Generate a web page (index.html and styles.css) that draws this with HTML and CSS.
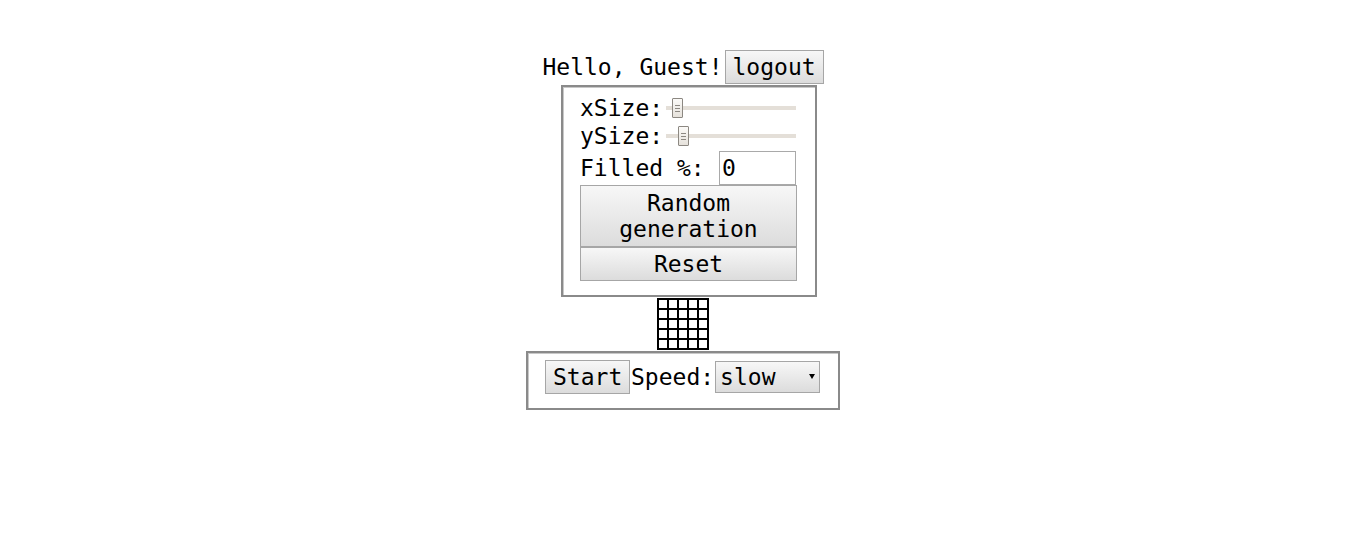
FILE: index.html
```html
<!DOCTYPE html>
<html>
<head>
<meta charset="utf-8">
<title>Game of Life</title>
<link rel="stylesheet" href="styles.css">
</head>
<body>
<div class="page">
  <div class="greeting"><span class="hello">Hello, Guest!</span><button class="btn btn-logout">logout</button></div>
  <div class="panel panel-settings">
    <div class="row row-slider"><span class="label">xSize:</span><input class="slider" type="range" min="0" max="100" value="5"></div>
    <div class="row row-slider"><span class="label">ySize:</span><input class="slider" type="range" min="0" max="100" value="10"></div>
    <div class="row row-filled"><span class="label label-filled">Filled %:</span><input class="text-input" type="text" value="0"></div>
    <button class="btn btn-wide btn-random">Random<br>generation</button>
    <button class="btn btn-wide btn-reset">Reset</button>
  </div>
  <div class="grid">
    <i></i><i></i><i></i><i></i><i></i>
    <i></i><i></i><i></i><i></i><i></i>
    <i></i><i></i><i></i><i></i><i></i>
    <i></i><i></i><i></i><i></i><i></i>
    <i></i><i></i><i></i><i></i><i></i>
  </div>
  <div class="panel panel-controls">
    <button class="btn btn-start">Start</button><span class="label">Speed:</span><span class="select-wrap"><select class="select"><option>slow</option><option>medium</option><option>fast</option></select></span>
  </div>
</div>
</body>
</html>
```

FILE: styles.css
```css
html, body {
  margin: 0;
  padding: 0;
  background: #ffffff;
}
body {
  font-family: "DejaVu Sans Mono", "Liberation Mono", monospace;
  font-size: 23px;
  color: #000000;
}
.page {
  display: flex;
  flex-direction: column;
  align-items: center;
  padding-top: 50px;
  padding-left: 8px;
}
.greeting {
  display: flex;
  align-items: center;
  height: 34px;
  margin-bottom: 1px;
  line-height: 26px;
}
.hello {
  margin-right: 2px;
}
.btn {
  font-family: inherit;
  font-size: 23px;
  line-height: 26px;
  color: #000;
  background: linear-gradient(#f7f7f7, #dcdcdc);
  border: 1px solid #a6a6a6;
  border-radius: 0;
  padding: 0 7px;
  margin: 0;
  height: 34px;
  cursor: pointer;
}
.btn-logout {
  width: 99px;
}
.panel {
  border: 2px solid #8a8a8a;
  box-shadow: inset 1px 1px 0 #c8c8c8;
  box-sizing: border-box;
}
.panel-settings {
  width: 256px;
  margin-left: 12px;
  padding: 7px 18px 14px 17px;
  display: flex;
  flex-direction: column;
}
.row {
  display: flex;
  align-items: center;
}
.row-slider {
  height: 28px;
}
.label {
  white-space: pre;
  line-height: 26px;
}
.slider {
  -webkit-appearance: none;
  appearance: none;
  width: 130px;
  height: 20px;
  margin: 0 0 0 3px;
  padding: 0;
  background: transparent;
}
.slider::-webkit-slider-runnable-track {
  height: 4px;
  background: #e4dfd8;
  border: none;
}
.slider::-webkit-slider-thumb {
  -webkit-appearance: none;
  appearance: none;
  width: 11px;
  height: 20px;
  margin-top: -8px;
  box-sizing: border-box;
  border: 1px solid #8c8882;
  border-radius: 1px;
  background:
    repeating-linear-gradient(to bottom, #8c8882 0 1px, transparent 1px 3px) center / 5px 7px no-repeat,
    linear-gradient(#fbfaf8, #e6e2dc);
}
.row-filled {
  height: 34px;
  margin-top: 1px;
}
.label-filled {
  width: 139px;
}
.text-input {
  width: 77px;
  height: 34px;
  box-sizing: border-box;
  border: 1px solid #a9a9a9;
  padding: 0 2px;
  margin: 0;
  font-family: inherit;
  font-size: 23px;
  color: #000;
  outline: none;
}
.btn-wide {
  width: 100%;
}
.btn-random {
  height: 62px;
  line-height: 26px;
}
.btn-reset {
  height: 34px;
}
.grid {
  display: grid;
  grid-template-columns: repeat(5, 8px);
  grid-auto-rows: 8px;
  gap: 2px;
  padding: 2px;
  background: #000;
  margin: 1px 0;
}
.grid i {
  background: #fff;
}
.panel-controls {
  width: 314px;
  height: 59px;
  padding: 7px 18px 0 17px;
  display: flex;
  align-items: flex-start;
}
.btn-start {
  width: 85px;
}
.panel-controls .label {
  height: 34px;
  line-height: 34px;
  margin-left: 1px;
}
.select-wrap {
  position: relative;
  display: block;
  margin-top: 1px;
  margin-left: 1px;
}
.select-wrap::after {
  content: "";
  position: absolute;
  right: 5px;
  top: 13px;
  border-left: 3px solid transparent;
  border-right: 3px solid transparent;
  border-top: 5px solid #000;
  pointer-events: none;
}
.select {
  -webkit-appearance: none;
  appearance: none;
  width: 105px;
  height: 32px;
  box-sizing: border-box;
  border: 1px solid #a6a6a6;
  border-radius: 0;
  background: linear-gradient(#f7f7f7, #dcdcdc);
  font-family: inherit;
  font-size: 23px;
  color: #000;
  padding: 0 0 0 4px;
  margin: 0;
  outline: none;
}
```
